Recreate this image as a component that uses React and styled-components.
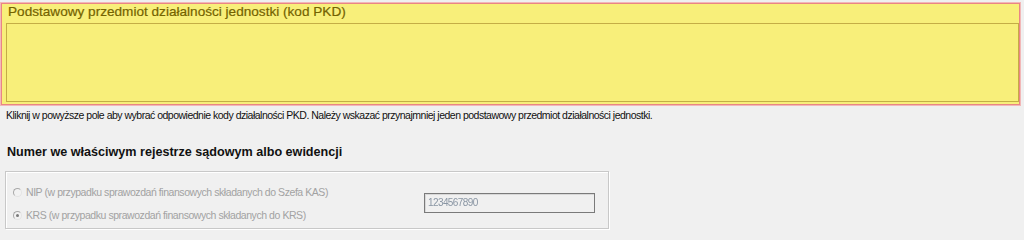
import React from "react";
import styled, { createGlobalStyle } from "styled-components";

const Global = createGlobalStyle`
  html, body { margin: 0; padding: 0; background: #f0f0f0; }
  body { font-family: "Liberation Sans", Arial, sans-serif; }
`;

const Page = styled.div`
  width: 1024px;
  height: 235px;
  overflow: hidden;
  padding-top: 2px;
  box-sizing: border-box;
`;

const PkdPanel = styled.div`
  width: 1021px;
  height: 104px;
  box-sizing: border-box;
  border: 1px solid #f2b8b8;
  background: #f8ef7a;
  box-shadow: inset 0 0 0 1px #e98585;
  display: flex;
  flex-direction: column;
  padding: 1px 1px 3px 1px;
`;

const PanelTitle = styled.div`
  height: 19px;
  line-height: 16px;
  padding-left: 6px;
  font-size: 13.6px;
  color: #746200;
  -webkit-text-stroke: 0.2px #746200;
`;

const PkdField = styled.div`
  flex: 1;
  margin-left: 4px;
  border: 1px solid #c4ad46;
  background: #f8ef7a;
`;

const Hint = styled.div`
  margin: 2px 0 0 6px;
  font-size: 10.5px;
  line-height: 14px;
  color: #111;
  letter-spacing: -0.5px;
`;

const Heading = styled.div`
  margin: 22px 0 0 7px;
  font-size: 12.6px;
  font-weight: bold;
  line-height: 16px;
  color: #111;
`;

const GroupBox = styled.div`
  margin: 11px 0 0 5px;
  width: 604px;
  height: 58px;
  box-sizing: border-box;
  border: 1px solid #c8c8c8;
  box-shadow: 1px 1px 0 #ffffff, inset 1px 1px 0 #ffffff;
  display: flex;
  align-items: flex-start;
  padding-top: 12px;
`;

const RadioList = styled.div`
  display: flex;
  flex-direction: column;
  gap: 6px;
  padding-left: 7px;
  width: 418px;
  box-sizing: border-box;
  flex-shrink: 0;
`;

const RadioRow = styled.label`
  display: flex;
  align-items: center;
  gap: 4px;
  font-size: 10.5px;
  line-height: 17px;
  color: #a2a2a2;
  letter-spacing: -0.44px;
`;

const RadioDot = styled.span`
  width: 9px;
  height: 9px;
  flex-shrink: 0;
  border-radius: 50%;
  box-sizing: border-box;
  border: 1px solid #a8a8a8;
  border-right-color: #e4e4e4;
  border-bottom-color: #e4e4e4;
  background: #f2f2f2;
  display: flex;
  align-items: center;
  justify-content: center;
  &::after {
    content: "";
    width: 3px;
    height: 3px;
    border-radius: 50%;
    background: ${(p) => (p.$checked ? "#7a7a7a" : "transparent")};
  }
`;

const NumberInput = styled.div`
  width: 171px;
  height: 20px;
  flex-shrink: 0;
  box-sizing: border-box;
  border: 1px solid #7a7a7a;
  box-shadow: inset 1px 1px 0 #d8d8d8;
  background: #f0f0f0;
  font-size: 10px;
  line-height: 18px;
  padding-left: 3px;
  color: #8a96a4;
  letter-spacing: -0.6px;
  margin-top: 9px;
`;

const Blurred = styled.span`
  filter: blur(0.5px);
`;

export default function App() {
  return (
    <>
      <Global />
      <Page>
        <PkdPanel>
          <PanelTitle>Podstawowy przedmiot działalności jednostki (kod PKD)</PanelTitle>
          <PkdField />
        </PkdPanel>
        <Hint>
          Kliknij w powyższe pole aby wybrać odpowiednie kody działalności PKD. Należy wskazać przynajmniej jeden podstawowy przedmiot działalności jednostki.
        </Hint>
        <Heading>Numer we właściwym rejestrze sądowym albo ewidencji</Heading>
        <GroupBox>
          <RadioList>
            <RadioRow>
              <RadioDot />
              NIP (w przypadku sprawozdań finansowych składanych do Szefa KAS)
            </RadioRow>
            <RadioRow>
              <RadioDot $checked />
              KRS (w przypadku sprawozdań finansowych składanych do KRS)
            </RadioRow>
          </RadioList>
          <NumberInput>
            <Blurred>1234567890</Blurred>
          </NumberInput>
        </GroupBox>
      </Page>
    </>
  );
}
